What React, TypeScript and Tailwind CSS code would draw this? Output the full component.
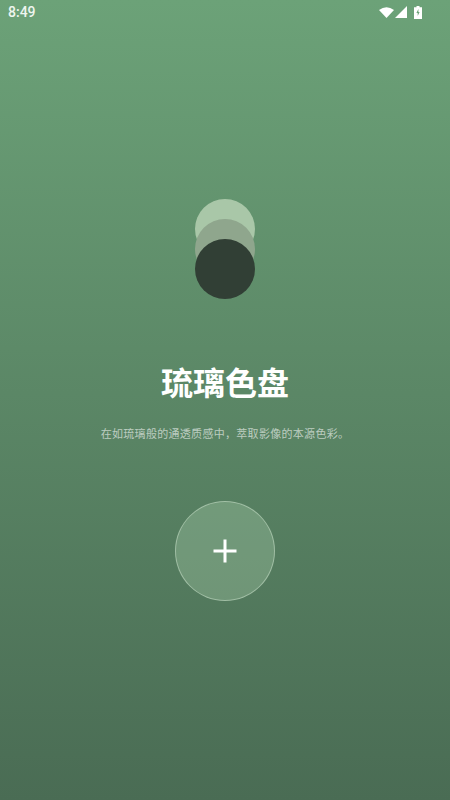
export default function App() {
  return (
    <div
      className="w-[450px] h-[800px] overflow-hidden flex flex-col items-center bg-gradient-to-b from-[#6ca278] to-[#4a6c54] text-white"
      style={{ fontFamily: '"Noto Sans CJK SC", "Noto Sans", sans-serif' }}
    >
      <div className="w-full h-6 shrink-0 flex items-center justify-between pl-2 pr-[28px]">
        <span className="text-[14px] leading-none font-medium text-[#eef5ef] font-['Roboto',sans-serif]">8:49</span>
        <div className="flex items-center">
          <svg width="15" height="11" viewBox="0 0 15 11" className="mr-[1px]">
            <path d="M0 3 Q7.5 -2.5 15 3 L7.5 11 Z" fill="#ffffff" />
          </svg>
          <svg width="12" height="12" viewBox="0 0 12 12" className="mr-[7px]">
            <path d="M12 0 V12 H0 Z" fill="#ffffff" />
          </svg>
          <svg width="8" height="13" viewBox="0 0 8 13">
            <path d="M2.5 0 H5.5 V1.2 H8 V13 H0 V1.2 H2.5 Z" fill="#ffffff" />
            <path d="M4.4 3 L2.4 7 H3.7 V10 L5.6 6 H4.4 Z" fill="#6ca278" />
          </svg>
        </div>
      </div>

      <div className="mt-[175px] flex flex-col items-center">
        <div className="w-[60px] h-[60px] rounded-full bg-[#a9c7a8]" />
        <div className="w-[60px] h-[60px] rounded-full bg-[#8fa68d] -mt-10" />
        <div className="w-[60px] h-[60px] rounded-full bg-[#313f35] -mt-10" />
      </div>

      <h1 className="mt-[62px] h-10 text-[32px] leading-10 font-bold text-white">琉璃色盘</h1>
      <p className="mt-[24px] h-4 text-[11px] leading-4 tracking-[0.3px] text-white/60">在如琉璃般的通透质感中，萃取影像的本源色彩。</p>

      <button className="mt-[60px] w-[100px] h-[100px] rounded-full bg-[#c8ecc8]/25 border border-[#cfe6cf]/50 flex items-center justify-center">
        <svg width="24" height="24" viewBox="0 0 24 24" fill="none" stroke="#ffffff" strokeWidth="3">
          <path d="M12 0.5 V23.5 M0.5 12 H23.5" />
        </svg>
      </button>
    </div>
  );
}
